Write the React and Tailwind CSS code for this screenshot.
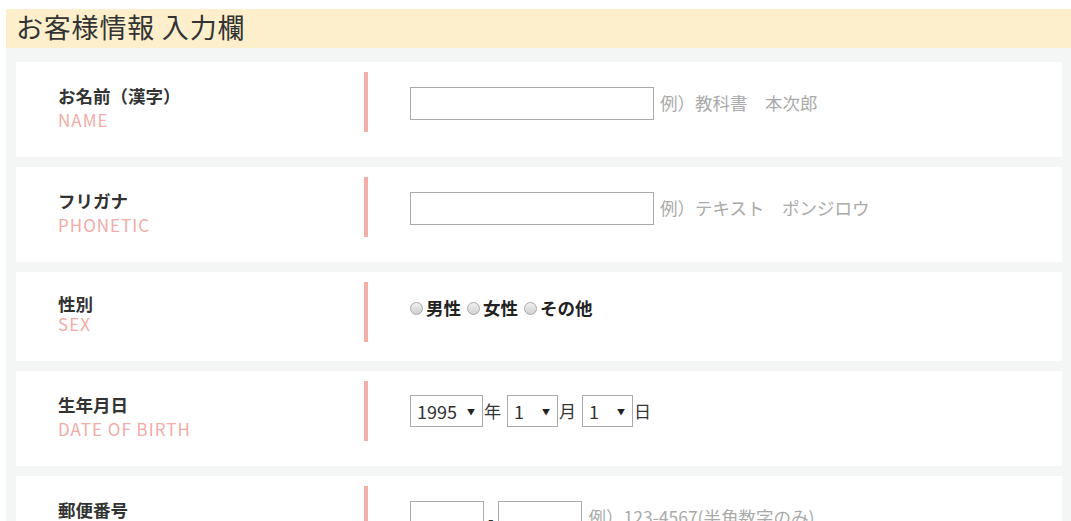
export default function App() {
  return (
    <div className="min-h-screen bg-white pl-[6px] pt-[9px] font-['Noto_Sans_CJK_JP',sans-serif] text-[#333]">
      <h2 className="h-[39px] bg-[#fdefcc] pl-[10px] text-[27px] leading-[36px] tracking-[0.8px] text-[#333]">
        お客様情報 入力欄
      </h2>
      <div className="flex flex-col gap-[10px] bg-[#f4f6f6] pb-[20px] pl-[10px] pr-[9px] pt-[14px]">
        <Row label="お名前（漢字）" sub="NAME" h="h-[95px]">
          <div className="flex items-center pt-[25px]">
            <input type="text" className="h-[33px] w-[244px] border border-[#aaa] bg-white" />
            <span className="ml-[6px] text-[17.5px] text-[#aaa]">例）教科書　本次郎</span>
          </div>
        </Row>
        <Row label="フリガナ" sub="PHONETIC" h="h-[95px]">
          <div className="flex items-center pt-[25px]">
            <input type="text" className="h-[33px] w-[244px] border border-[#aaa] bg-white" />
            <span className="ml-[6px] text-[17.5px] text-[#aaa]">例）テキスト　ポンジロウ</span>
          </div>
        </Row>
        <Row label="性別" sub="SEX" h="h-[89px]" tight>
          <div className="flex items-center pt-[24px] text-[17.5px] font-bold leading-[24px] text-[#222]">
            <Radio />
            <span className="ml-[3px]">男性</span>
            <span className="ml-[6px] flex"><Radio /></span>
            <span className="ml-[3px]">女性</span>
            <span className="ml-[6px] flex"><Radio /></span>
            <span className="ml-[3px]">その他</span>
          </div>
        </Row>
        <Row label="生年月日" sub="DATE OF BIRTH" h="h-[95px]">
          <div className="flex items-center pt-[24px] text-[17px] text-[#333]">
            <Select value="1995" w="w-[73px]" />
            <span className="ml-[1px] w-[23px]">年</span>
            <Select value="1" w="w-[51px]" />
            <span className="ml-[1px] w-[23px]">月</span>
            <Select value="1" w="w-[51px]" />
            <span className="ml-[1px]">日</span>
          </div>
        </Row>
        <Row label="郵便番号" sub="POSTAL CODE" h="h-[95px]">
          <div className="flex items-center pt-[25px]">
            <input type="text" className="h-[33px] w-[74px] border border-[#aaa] bg-white" />
            <span className="mx-[4px] text-[16px] text-[#333]">-</span>
            <input type="text" className="h-[33px] w-[84px] border border-[#aaa] bg-white" />
            <span className="ml-[7px] text-[17.5px] text-[#aaa]">例）123-4567(半角数字のみ)</span>
          </div>
        </Row>
      </div>
    </div>
  );
}

function Row({ label, sub, h, tight, children }) {
  return (
    <div className={`flex bg-white ${h}`}>
      <div className="mt-[10px] h-[60px] w-[352px] shrink-0 border-r-4 border-[#f3aea9] pl-[42px] pt-[11px]">
        <p className={`text-[17.5px] font-bold ${tight ? "leading-[21px]" : "leading-[25px]"} text-[#333]`}>{label}</p>
        <p className={`text-[17px] tracking-[1px] ${tight ? "leading-[20px]" : "leading-[24px]"} text-[#f2aba7]`}>{sub}</p>
      </div>
      <div className="pl-[42px]">{children}</div>
    </div>
  );
}

function Radio() {
  return (
    <span className="inline-block h-[13px] w-[13px] rounded-full border border-[#a9a9a9] bg-gradient-to-b from-[#f0f0f0] to-[#d0d0d0]" />
  );
}

function Select({ value, w }) {
  return (
    <span className={`relative inline-flex h-[32px] items-center border border-[#aaa] bg-white pl-[6px] ${w}`}>
      <select className="w-full appearance-none bg-transparent text-[18px] outline-none">
        <option>{value}</option>
      </select>
      <span className="pointer-events-none absolute right-[7px] top-[10px] text-[8px] text-[#222]">▼</span>
    </span>
  );
}
